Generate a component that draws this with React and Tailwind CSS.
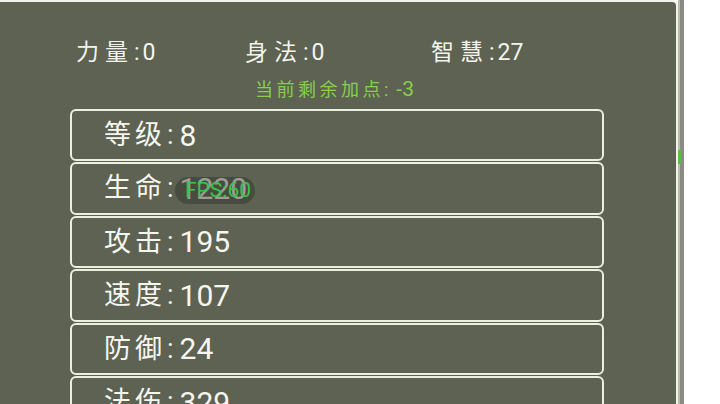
const stats = [
  { label: "等级", value: 8 },
  { label: "生命", value: 1220 },
  { label: "攻击", value: 195 },
  { label: "速度", value: 107 },
  { label: "防御", value: 24 },
  { label: "法伤", value: 329 },
];

const font = { fontFamily: '"Roboto", "Noto Sans CJK SC", sans-serif' };

export default function App() {
  return (
    <div
      className="relative w-[720px] h-[404px] overflow-hidden bg-white flex flex-col"
      style={font}
    >
      {/* top strip */}
      <div className="h-[3px] w-[684px] bg-[#7a7d70]" />
      <div className="flex flex-1">
        <div className="w-[678px] bg-[#5e6252] border-t-2 border-r-2 border-[#f2f3ea] rounded-tr-[6px] flex flex-col">
          {/* attributes */}
          <div className="flex items-baseline pl-[76px] pt-[33px] leading-[36px] text-[#f4f4ee]">
            <div className="w-[169px]">
              <span className="text-[23px] tracking-[6px]">力量</span>
              <span className="text-[23px] pr-[3px]">:</span>
              <span className="text-[23px]">0</span>
            </div>
            <div className="w-[186px]">
              <span className="text-[23px] tracking-[6px]">身法</span>
              <span className="text-[23px] pr-[3px]">:</span>
              <span className="text-[23px]">0</span>
            </div>
            <div>
              <span className="text-[23px] tracking-[6px]">智慧</span>
              <span className="text-[23px] pr-[3px]">:</span>
              <span className="text-[23px]">27</span>
            </div>
          </div>
          <div className="pl-[255px] mt-[4px] leading-[24px] text-[#86d04a]">
            <span className="text-[18px] tracking-[3.5px]">当前剩余加点</span>
            <span className="text-[18px] pr-[8px]">:</span>
            <span className="text-[21px]">-3</span>
          </div>
          {/* stat rows */}
          <div className="flex flex-col gap-px pl-[70px] mt-[6px]">
            {stats.map((s) => (
              <div
                key={s.label}
                className="w-[534px] h-[52.4px] shrink-0 border-2 border-[#eceede] rounded-[6px] flex items-center pl-[32px] text-[#f6f6f0]"
              >
                <span className="text-[27px] tracking-[4px]">{s.label}</span>
                <span className="text-[27px] pl-[1px] pr-[6px]">:</span>
                <span className="text-[30px]">{s.value}</span>
              </div>
            ))}
          </div>
        </div>
        {/* right gutter */}
        <div className="w-[6px] bg-[#8a8c84] border-l-2 border-[#b9bab2] relative">
          <div className="absolute left-[-2px] top-[150px] w-[3px] h-[14px] bg-[#58c040]" />
        </div>
      </div>
      {/* fps overlay */}
      <div className="absolute left-[175px] top-[177px] w-[80px] h-[27px] rounded-full bg-[#2e3028]/45 flex items-center pl-[10px] text-[21px] text-[#3cc44a]">
        FPS:60
      </div>
    </div>
  );
}
